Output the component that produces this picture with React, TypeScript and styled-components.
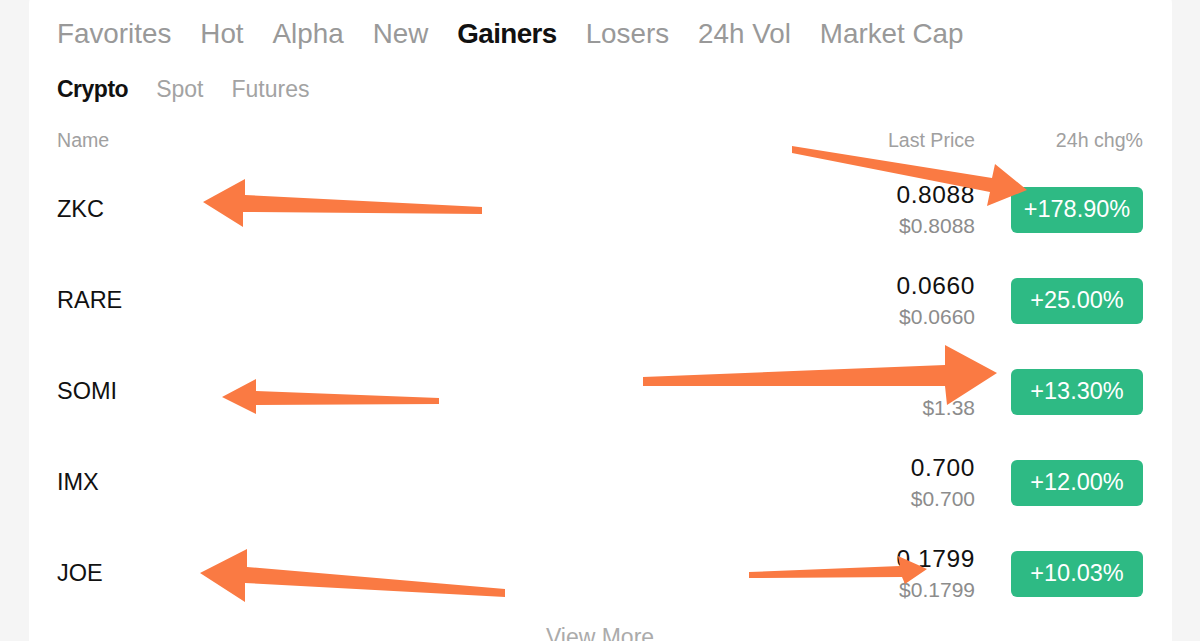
import React from 'react'
import styled, { createGlobalStyle } from 'styled-components'

const GlobalStyle = createGlobalStyle`
  html, body {
    margin: 0;
    padding: 0;
    background: #f5f5f5;
  }
  body {
    font-family: "Liberation Sans", Arial, sans-serif;
  }
`

const Page = styled.div`
  position: relative;
  width: 1200px;
  height: 641px;
  overflow: hidden;
  background: #f5f5f5;
  padding: 0 28px 0 29px;
  box-sizing: border-box;
`

const Card = styled.div`
  background: #fff;
  margin-top: -12px;
  border-radius: 16px;
  padding: 26px 29px 0 28px;
  height: 700px;
  box-sizing: border-box;
`

const Tabs = styled.div`
  display: flex;
  align-items: center;
  gap: 29px;
  height: 40px;
`

const Tab = styled.span<{ active?: boolean }>`
  font-size: 27.8px;
  line-height: 40px;
  color: ${({ active }) => (active ? '#111' : '#999')};
  font-weight: ${({ active }) => (active ? 700 : 400)};
  letter-spacing: ${({ active }) => (active ? '-0.6px' : '0')};
  white-space: nowrap;
`

const SubTabs = styled.div`
  display: flex;
  align-items: center;
  gap: 28px;
  height: 40px;
  margin-top: 15px;
`

const SubTab = styled.span<{ active?: boolean }>`
  font-size: 23px;
  line-height: 40px;
  color: ${({ active }) => (active ? '#111' : '#a3a3a3')};
  font-weight: ${({ active }) => (active ? 700 : 400)};
  letter-spacing: ${({ active }) => (active ? '-0.5px' : '0')};
`

const Grid = styled.div`
  display: grid;
  grid-template-columns: 1fr auto 132px;
  column-gap: 36px;
  align-items: center;
`

const HeaderRow = styled(Grid)`
  height: 40px;
  margin-top: 11px;
  margin-bottom: 4px;
  font-size: 19.6px;
  color: #a0a0a0;
`

const HeadCell = styled.span<{ right?: boolean }>`
  text-align: ${({ right }) => (right ? 'right' : 'left')};
  white-space: nowrap;
`

const Row = styled(Grid)`
  height: 91px;
`

const Symbol = styled.span`
  font-size: 23.5px;
  color: #111;
`

const PriceStack = styled.div`
  display: flex;
  flex-direction: column;
  align-items: flex-end;
  gap: 4px;
`

const Price = styled.span`
  font-size: 24.5px;
  line-height: 28px;
  color: #111;
  letter-spacing: 0.6px;
`

const Fiat = styled.span`
  font-size: 21px;
  line-height: 26px;
  color: #8c8c8c;
`

const Badge = styled.span`
  display: flex;
  align-items: center;
  justify-content: center;
  height: 46px;
  border-radius: 6px;
  background: #2eba84;
  color: #fff;
  font-size: 23.5px;
`

const ViewMore = styled.div`
  text-align: center;
  font-size: 23px;
  line-height: 36px;
  color: #ababab;
`

const Overlay = styled.svg`
  position: absolute;
  left: 0;
  top: 0;
  pointer-events: none;
`

const tabs = ['Favorites', 'Hot', 'Alpha', 'New', 'Gainers', 'Losers', '24h Vol', 'Market Cap']

const coins = [
  { name: 'ZKC', price: '0.8088', fiat: '$0.8088', chg: '+178.90%' },
  { name: 'RARE', price: '0.0660', fiat: '$0.0660', chg: '+25.00%' },
  { name: 'SOMI', price: '1.38', fiat: '$1.38', chg: '+13.30%' },
  { name: 'IMX', price: '0.700', fiat: '$0.700', chg: '+12.00%' },
  { name: 'JOE', price: '0.1799', fiat: '$0.1799', chg: '+10.03%' }
]

// hand-drawn annotation arrows laid over the list
const arrows = [
  '203,202 245,179 245,195 482,207 482,214 243,212 243,227',
  '792,146 992,178 995,164 1027,190 987,206 990,192 792,153',
  '643,377 945,365 945,345 997,373 947,405 945,386 643,386',
  '222,397 256,379 256,391 439,398 439,404 256,405 256,414',
  '200,573 247,549 247,567 505,589 505,597 245,583 245,602',
  '749,572 900,566 898,556 927,569 905,584 902,577 749,578'
]

export default function App() {
  return (
    <>
      <GlobalStyle />
      <Page>
        <Card>
          <Tabs>
            {tabs.map(t => (
              <Tab key={t} active={t === 'Gainers'}>
                {t}
              </Tab>
            ))}
          </Tabs>
          <SubTabs>
            <SubTab active>Crypto</SubTab>
            <SubTab>Spot</SubTab>
            <SubTab>Futures</SubTab>
          </SubTabs>
          <HeaderRow>
            <HeadCell>Name</HeadCell>
            <HeadCell right>Last Price</HeadCell>
            <HeadCell right>24h chg%</HeadCell>
          </HeaderRow>
          {coins.map(c => (
            <Row key={c.name}>
              <Symbol>{c.name}</Symbol>
              <PriceStack>
                <Price>{c.price}</Price>
                <Fiat>{c.fiat}</Fiat>
              </PriceStack>
              <Badge>{c.chg}</Badge>
            </Row>
          ))}
          <ViewMore>View More</ViewMore>
        </Card>
        <Overlay width={1200} height={641} viewBox="0 0 1200 641">
          {arrows.map((p, i) => (
            <polygon key={i} points={p} fill="#fa7a43" strokeLinejoin="round" />
          ))}
        </Overlay>
      </Page>
    </>
  )
}
